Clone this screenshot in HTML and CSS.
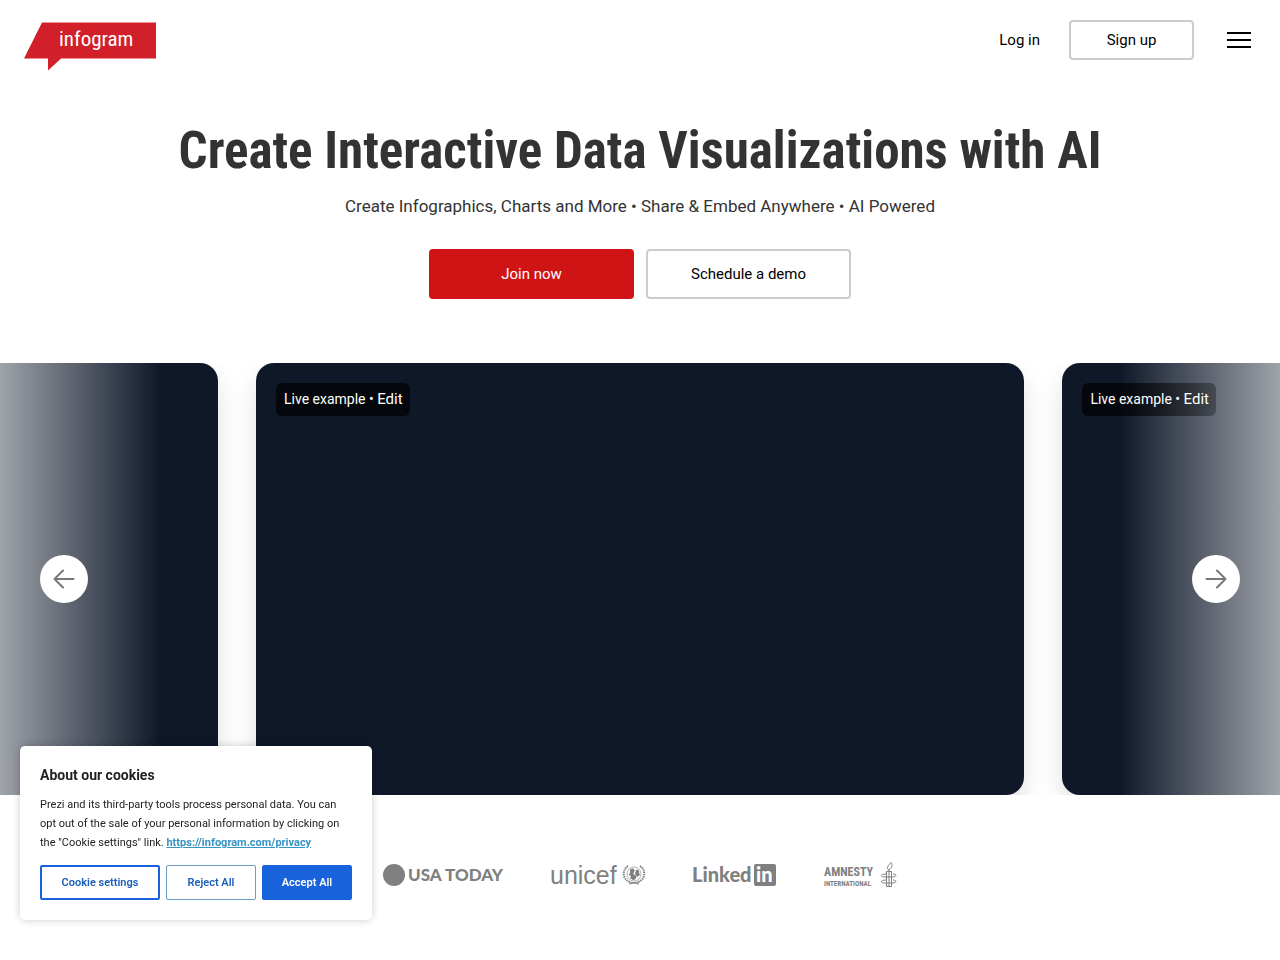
FILE: index.html
```html
<!DOCTYPE html>
<html lang="en">
<head>
    <meta charset="UTF-8">
    <meta name="viewport" content="width=device-width, initial-scale=1.0">
    <title>Create Interactive Data Visualizations with AI - Infogram</title>
    <link rel="stylesheet" href="styles.css">
</head>
<body>
    <header class="header">
        <a href="#" class="logo" aria-label="Infogram">
            <svg width="132" height="50" viewBox="0 0 132 50">
                <path d="M18 2.500H132V38.500H37L24 50.500V38.500H0Z" fill="#d2202a"/>
                <text x="35" y="26" class="logo-text">infogram</text>
            </svg>
        </a>
        <nav class="nav">
            <a href="#" class="login">Log in</a>
            <button class="btn btn-signup">Sign up</button>
            <button class="menu" aria-label="Menu">
                <span></span>
                <span></span>
                <span></span>
            </button>
        </nav>
    </header>

    <main>
        <section class="hero">
            <h1>Create Interactive Data Visualizations with AI</h1>
            <p>Create Infographics, Charts and More • Share &amp; Embed Anywhere • AI Powered</p>
            <div class="hero-buttons">
                <button class="btn btn-red">Join now</button>
                <button class="btn">Schedule a demo</button>
            </div>
        </section>

        <section class="slider">
            <div class="slides">
                <div class="slide"></div>
                <div class="slide">
                    <div class="badge">Live example • <a href="#">Edit</a></div>
                </div>
                <div class="slide">
                    <div class="badge">Live example • <a href="#">Edit</a></div>
                </div>
            </div>
            <div class="fade fade-left"></div>
            <div class="fade fade-right"></div>
            <button class="arrow arrow-left" aria-label="Previous">
                <svg width="24" height="24" viewBox="0 0 24 24"><path d="M21.500 12H2.500M11 3.500L2.500 12L11 20.500"/></svg>
            </button>
            <button class="arrow arrow-right" aria-label="Next">
                <svg width="24" height="24" viewBox="0 0 24 24"><path d="M2.500 12H21.500M13 3.500L21.500 12L13 20.500"/></svg>
            </button>
        </section>

        <section class="brands">
            <svg width="120" height="26" viewBox="0 0 120 26">
                <circle cx="11" cy="13" r="11"/>
                <text x="25" y="19" class="usa">USA</text>
                <text x="62" y="19" class="usa">TODAY</text>
            </svg>
            <svg width="94" height="26" viewBox="0 0 94 26">
                <text x="-1" y="22" class="unicef">unicef</text>
                <g class="line">
                    <circle cx="83" cy="12" r="7" stroke-width="0.600"/>
                    <path d="M77 4C71 8 71 17 79 20M89 4C95 8 95 17 87 20" stroke-width="2" stroke-dasharray="1.500 0.800"/>
                    <path d="M79 20L88 22M87 20L78 22"/>
                </g>
                <path d="M79 8C80 6 83 6 83.500 8C84 10 82 10 82.500 12L85 14C86 16 84 18 82 18L79 16L80 14L77.500 13L79 11ZM85 8C87 7 89 9 88 11L89 13L86 15L84 12Z"/>
            </svg>
            <svg width="83" height="26" viewBox="0 0 83 26">
                <text x="-1" y="20" class="linkedin">Linked</text>
                <rect x="61" y="2" width="22" height="22" rx="2"/>
                <text x="63" y="20" class="linkedin white">in</text>
            </svg>
            <svg width="73" height="26" viewBox="0 0 73 26">
                <text x="0" y="14" class="amnesty">AMNESTY</text>
                <text x="0" y="24" class="international">INTERNATIONAL</text>
                <g class="line">
                    <path d="M65 8C61 6 65 3 67 0.500C69 3 68 6 65 8V10M62.500 9.500H67.500V24.500H62.500ZM65 10V24M62 12C56 12 56 15 61 15H68C73 15 73 12 69 12M62 18C56 18 56 21 61 21H68C73 21 73 18 69 18"/>
                </g>
            </svg>
        </section>
    </main>

    <div class="cookies">
        <h2>About our cookies</h2>
        <p>Prezi and its third-party tools process personal data. You can opt out of the sale of your personal information by clicking on the "Cookie settings" link. <a href="#">https://infogram.com/privacy</a></p>
        <div class="cookie-buttons">
            <button class="cookie-settings">Cookie settings</button>
            <button class="cookie-reject">Reject All</button>
            <button class="cookie-accept">Accept All</button>
        </div>
    </div>
</body>
</html>
```
FILE: styles.css
```css
* {
    box-sizing: border-box;
}
body {
    font-family: Roboto, Arial, sans-serif;
    background: white;
    color: #333;
    margin: 0;
}
a {
    color: inherit;
    text-decoration: none;
}
button {
    font-family: inherit;
    cursor: pointer;
}
.header {
    display: flex;
    justify-content: space-between;
    align-items: flex-start;
    padding: 20px 24px;
}
.logo svg {
    display: block;
    overflow: visible;
}
.logo-text {
    font: 21px "Roboto Condensed", "Liberation Sans Narrow", sans-serif;
    fill: white;
}
.nav {
    display: flex;
    align-items: center;
}
.login {
    color: black;
    font-size: 15px;
    margin-right: 29px;
}
.btn {
    width: 205px;
    height: 50px;
    border: 2px solid #ccc;
    border-radius: 4px;
    background: white;
    color: black;
    font-size: 15px;
}
.btn-signup {
    width: 125px;
    height: 40px;
}
.btn-red {
    background: #d01416;
    border-color: #d01416;
    color: white;
}
.menu {
    display: flex;
    flex-direction: column;
    gap: 5px;
    margin-left: 28px;
    padding: 5px;
    border: none;
    background: none;
}
.menu span {
    width: 24px;
    height: 2px;
    background: black;
}
.hero {
    padding: 31px 20px 64px;
    text-align: center;
}
.hero h1 {
    font-family: "Roboto Condensed", "Liberation Sans Narrow", sans-serif;
    font-size: 51px;
    line-height: 60px;
    margin: 0 0 13px;
}
.hero p {
    font-size: 17px;
    line-height: 24px;
    margin: 0 0 31px;
}
.hero-buttons {
    display: flex;
    justify-content: center;
    gap: 12px;
}
.slider {
    position: relative;
    overflow: hidden;
}
.slides {
    display: flex;
    justify-content: center;
    gap: 3%;
}
.slide {
    flex: none;
    width: 60%;
    aspect-ratio: 16 / 9;
    padding: 20px;
    border-radius: 18px;
    background: #0f1829;
    box-shadow: 0 12px 24px rgba(0, 0, 0, 0.12);
}
.badge {
    display: inline-block;
    padding: 7px 7px 7px 8px;
    border-radius: 6px;
    background: rgba(0, 0, 0, 0.7);
    color: white;
    font-size: 14px;
    line-height: 19px;
}
/* keep the badge readable over the fade */
.slide:last-child .badge {
    position: relative;
    z-index: 1;
    background: linear-gradient(to right, rgba(0, 0, 0, 0.7) 30%, rgba(0, 0, 0, 0.3));
}
.badge a {
    font-size: 15px;
}
.fade {
    position: absolute;
    top: 0;
    bottom: 0;
    width: 160px;
    pointer-events: none;
}
.fade-left {
    left: 0;
    background: linear-gradient(to right, rgba(255, 255, 255, 0.6), rgba(255, 255, 255, 0));
}
.fade-right {
    right: 0;
    background: linear-gradient(to left, rgba(255, 255, 255, 0.6), rgba(255, 255, 255, 0));
}
.arrow {
    position: absolute;
    top: 50%;
    display: flex;
    align-items: center;
    justify-content: center;
    width: 48px;
    height: 48px;
    border: none;
    border-radius: 50%;
    background: white;
    transform: translateY(-50%);
}
.arrow-left {
    left: 40px;
}
.arrow-right {
    right: 40px;
}
.arrow path {
    fill: none;
    stroke: #777;
    stroke-width: 2;
    stroke-linecap: round;
    stroke-linejoin: round;
}
.brands {
    display: flex;
    justify-content: center;
    gap: 48px;
    padding: 67px 20px;
}
.brands svg {
    overflow: visible;
    fill: #808080;
}
.brands .line {
    fill: none;
    stroke: #808080;
}
.usa {
    font: 900 17px Lato, sans-serif;
}
.unicef {
    font: 25px "Liberation Sans", sans-serif;
}
.linkedin {
    font: 900 20px Lato, sans-serif;
}
.brands .white {
    fill: white;
}
.amnesty {
    font: bold 12px "Roboto Condensed", "Liberation Sans Narrow", sans-serif;
}
.international {
    font: bold 7px "Roboto Condensed", "Liberation Sans Narrow", sans-serif;
}
.cookies {
    position: fixed;
    z-index: 2;
    left: 20px;
    bottom: 40px;
    width: 352px;
    padding: 19px 20px 20px;
    border-radius: 5px;
    background: white;
    box-shadow: 0 0 8px rgba(0, 0, 0, 0.2);
    color: #222;
}
.cookies h2 {
    font-size: 14px;
    line-height: 20px;
    margin: 0 0 10px;
}
.cookies p {
    font-size: 11px;
    line-height: 19px;
    margin: 0 0 13px;
}
.cookies a {
    color: #3793c5;
    font-weight: bold;
    text-decoration: underline;
}
.cookie-buttons {
    display: grid;
    grid-template-columns: 4fr 3fr 3fr;
    gap: 6px;
}
.cookie-buttons button {
    height: 35px;
    padding: 0;
    border: 1px solid #1863dc;
    border-radius: 2px;
    background: white;
    color: #1a5fb8;
    font-size: 11px;
    font-weight: 600;
}
.cookie-buttons .cookie-settings {
    border-width: 2px;
}
.cookie-buttons .cookie-reject {
    border-color: #6f9bc8;
}
.cookie-buttons .cookie-accept {
    background: #1863dc;
    color: white;
}
```
